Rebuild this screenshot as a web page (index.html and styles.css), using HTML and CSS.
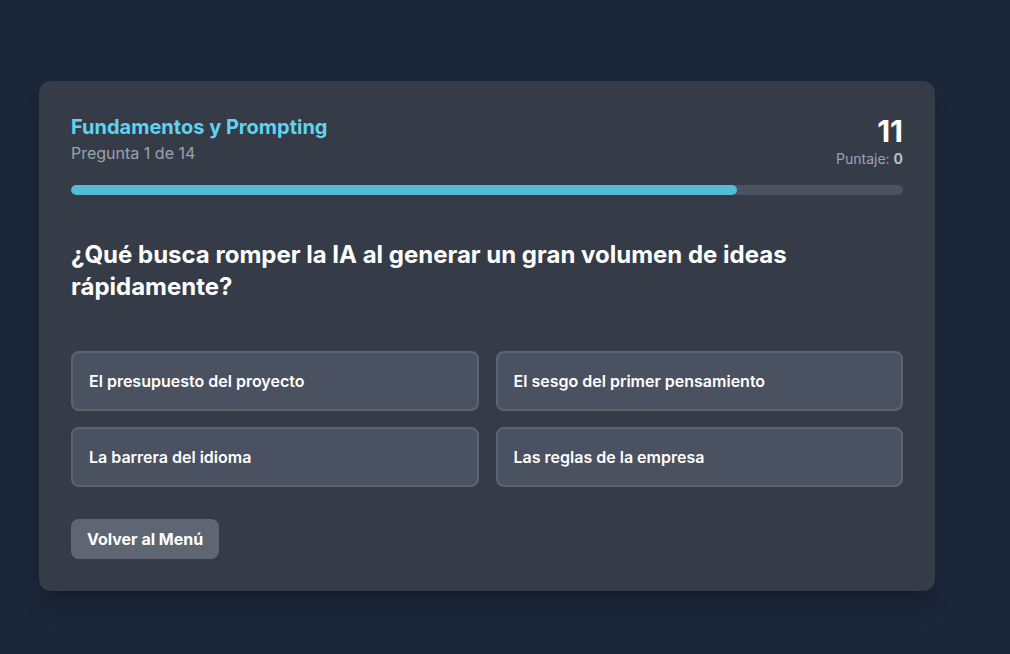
FILE: index.html
```html
<!DOCTYPE html>
<html lang="es">
<head>
<meta charset="utf-8">
<link rel="stylesheet" href="styles.css">
</head>
<body>
<main class="page">
  <section class="card">
    <header class="head">
      <div class="titles">
        <h1 class="topic">Fundamentos y Prompting</h1>
        <p class="count">Pregunta 1 de 14</p>
      </div>
      <div class="score">
        <div class="timer">11</div>
        <div class="points">Puntaje: <b>0</b></div>
      </div>
    </header>
    <div class="track"><div class="fill" style="width:80%"></div></div>
    <h2 class="question">¿Qué busca romper la IA al generar un gran volumen de ideas rápidamente?</h2>
    <div class="options">
      <button class="option">El presupuesto del proyecto</button>
      <button class="option">El sesgo del primer pensamiento</button>
      <button class="option">La barrera del idioma</button>
      <button class="option">Las reglas de la empresa</button>
    </div>
    <button class="back">Volver al Menú</button>
  </section>
</main>
</body>
</html>
```
FILE: styles.css
```css
* { box-sizing: border-box; }
html, body { margin: 0; padding: 0; }
body {
  background: #1b2639;
  font-family: Inter, "Noto Sans", sans-serif;
  color: #fff;
  width: 1010px;
  height: 654px;
  overflow: hidden;
}
.page {
  padding: 81px 0 0 39px;
}
.card {
  width: 896px;
  height: 510px;
  background: #353c48;
  border-radius: 12px;
  padding: 32px;
  box-shadow: 0 20px 25px -5px rgba(0,0,0,0.15), 0 8px 10px -6px rgba(0,0,0,0.15);
}
.head {
  display: flex;
  justify-content: space-between;
  align-items: flex-start;
  height: 72px;
}
.topic {
  margin: 0;
  font-size: 20px;
  line-height: 28px;
  font-weight: 700;
  color: #5fd3f1;
}
.count {
  margin: 0;
  font-size: 16px;
  line-height: 24px;
  color: #9ca3af;
}
.score {
  text-align: right;
}
.timer {
  font-size: 30px;
  line-height: 36px;
  font-weight: 700;
  color: #fff;
}
.points {
  font-size: 14px;
  line-height: 20px;
  color: #9ca3af;
}
.points b { font-weight: 700; color: #b6bcc6; }
.track {
  height: 10px;
  background: #4b5261;
  border-radius: 6px;
  overflow: hidden;
}
.fill {
  height: 100%;
  background: #55bcd8;
  border-radius: 6px;
}
.question {
  margin: 44px 0 0;
  font-size: 24px;
  line-height: 32px;
  font-weight: 700;
  color: #fff;
  height: 112px;
}
.options {
  display: grid;
  grid-template-columns: 1fr 1fr;
  gap: 16px 17px;
}
.option {
  height: 60px;
  text-align: left;
  background: #4a5160;
  border: 2px solid #5c6371;
  border-radius: 8px;
  padding: 0 16px;
  font-family: inherit;
  font-size: 16px;
  font-weight: 600;
  color: #fff;
}
.back {
  margin-top: 32px;
  height: 40px;
  padding: 0 16px;
  background: #5f6673;
  border: none;
  border-radius: 8px;
  font-family: inherit;
  font-size: 16px;
  font-weight: 700;
  color: #fff;
}
```
